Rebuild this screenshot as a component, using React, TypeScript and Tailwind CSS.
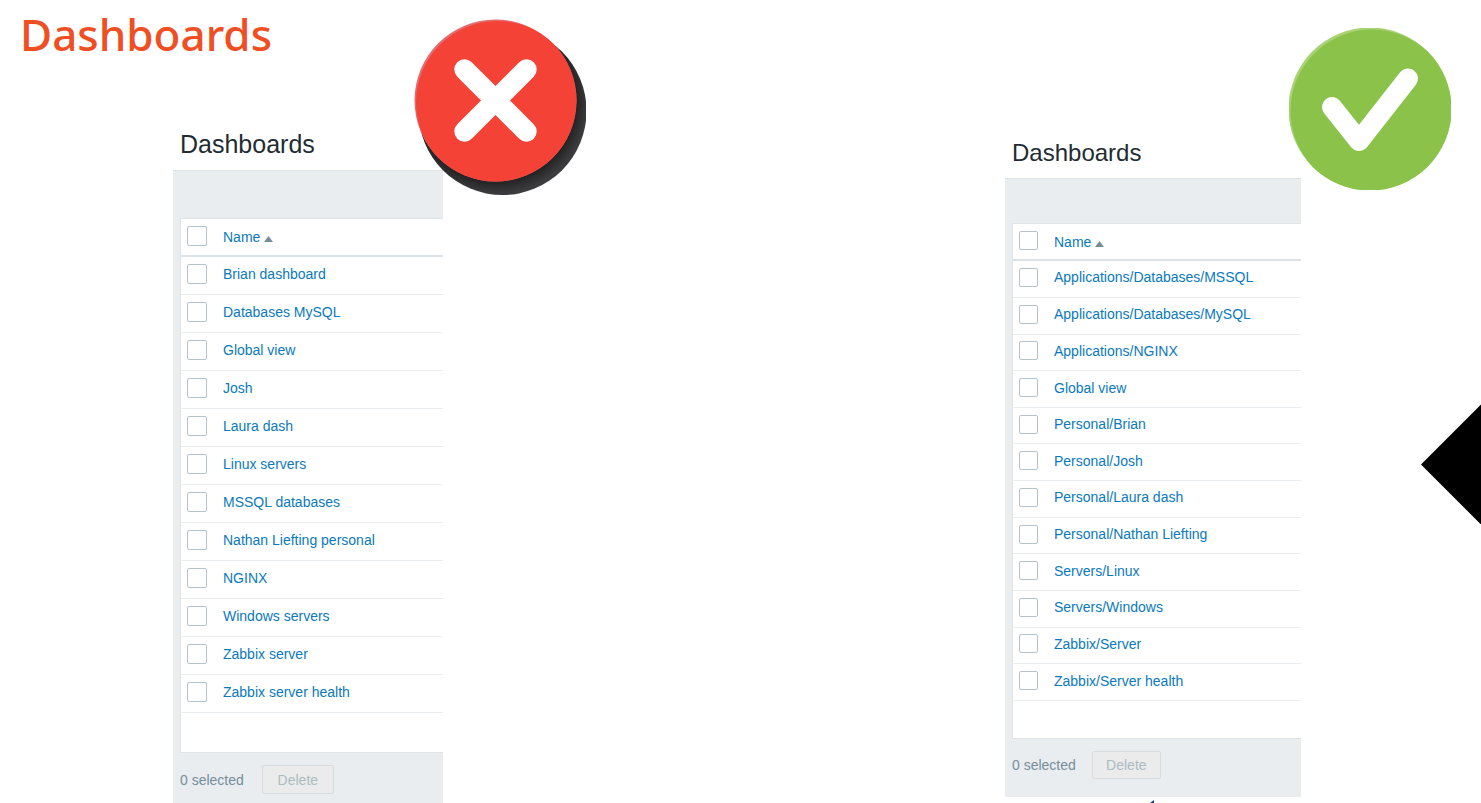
import React from "react";

type Size = "large" | "small";

const leftNames = [
  "Brian dashboard",
  "Databases MySQL",
  "Global view",
  "Josh",
  "Laura dash",
  "Linux servers",
  "MSSQL databases",
  "Nathan Liefting personal",
  "NGINX",
  "Windows servers",
  "Zabbix server",
  "Zabbix server health",
];

const rightNames = [
  "Applications/Databases/MSSQL",
  "Applications/Databases/MySQL",
  "Applications/NGINX",
  "Global view",
  "Personal/Brian",
  "Personal/Josh",
  "Personal/Laura dash",
  "Personal/Nathan Liefting",
  "Servers/Linux",
  "Servers/Windows",
  "Zabbix/Server",
  "Zabbix/Server health",
];

const sizes = {
  large: {
    heading: "text-[25px] leading-[32px] h-[42px]",
    toolbar: "h-[47px]",
    table: "h-[494px]",
    headRow: "h-[37px]",
    tickColumn: "w-[42px]",
    box: "size-5",
    blank: "h-[39px]",
    footer: "pt-[12px] pb-[10px]",
    button: "ml-[18px] h-[29px] w-[72px]",
  },
  small: {
    heading: "text-[24px] leading-[30px] h-[40px]",
    toolbar: "h-[44px]",
    table: "h-[477px]",
    headRow: "h-[36px]",
    tickColumn: "w-[41px]",
    box: "size-[19px]",
    blank: "h-[37px]",
    footer: "pt-[12px] pb-[18px]",
    button: "ml-4 h-[28px] w-[69px]",
  },
};

function Tick({ label, size }: { label: string; size: Size }) {
  return (
    <input
      type="checkbox"
      aria-label={label}
      className={`block appearance-none rounded-[2px] border border-[#b4c3cb] bg-white ${sizes[size].box}`}
    />
  );
}

function DashboardList({ names, size }: { names: string[]; size: Size }) {
  const s = sizes[size];
  return (
    <>
      <h2 className={`pl-[7px] text-[#1f2c33] ${s.heading}`}>Dashboards</h2>
      <div className="border-t border-[#dfe4e7] bg-[#e9edf0] pl-[7px] text-[14px] leading-5">
        <div className={s.toolbar} />
        <div className="border-y border-l border-[#dfe4e7] bg-white">
          <table className={`w-full border-collapse ${s.table}`}>
            <thead>
              <tr className={`border-b-2 border-[#dce2e5] ${s.headRow}`}>
                <th className={`p-0 pb-[2px] pl-[6px] ${s.tickColumn}`}>
                  <Tick label="Select all" size={size} />
                </th>
                <th className="p-0 text-left font-normal">
                  <a href="#name" className="inline-flex items-center gap-1 text-[#0a79bd]">
                    Name
                    <svg width="9" height="6" viewBox="0 0 9 6" className="mt-1" aria-hidden="true">
                      <path d="M0 6 4.5 0 9 6Z" fill="#768d99" />
                    </svg>
                  </a>
                </th>
              </tr>
            </thead>
            <tbody>
              {names.map((name) => (
                <tr key={name} className="border-b border-[#ebeef0]">
                  <td className="p-0 pb-[3px] pl-[6px]">
                    <Tick label={name} size={size} />
                  </td>
                  <td className="p-0 pb-[3px]">
                    <a href="#dashboard" className="text-[#0a79bd]">
                      {name}
                    </a>
                  </td>
                </tr>
              ))}
            </tbody>
          </table>
          <div className={s.blank} />
        </div>
        <div className={`flex items-center ${s.footer}`}>
          <span className="text-[#768d99]">0 selected</span>
          <button
            type="button"
            disabled
            className={`rounded-[2px] border border-[#d6dcdf] bg-[#ebebeb] text-[#acbbc2] ${s.button}`}
          >
            Delete
          </button>
        </div>
      </div>
    </>
  );
}

function CrossBadge() {
  return (
    <svg width="172" height="177" viewBox="0 0 172 177" className="absolute -top-[110px] left-[241px]" aria-hidden="true">
      <defs>
        <radialGradient id="cross-shade" gradientUnits="userSpaceOnUse" cx="82" cy="84" r="98">
          <stop offset="0.82" stopColor="#242425" />
          <stop offset="0.94" stopColor="#3c3c3e" />
        </radialGradient>
        <clipPath id="cross-disc">
          <circle cx="81.500" cy="82.500" r="81" />
        </clipPath>
      </defs>
      <circle cx="88.500" cy="93" r="84" fill="url(#cross-shade)" />
      <circle cx="81.500" cy="82.500" r="81" fill="#e36b72" />
      <circle cx="83.500" cy="84.500" r="81.500" fill="#f44336" clipPath="url(#cross-disc)" />
      <path d="M50.500 51.500 112.500 113.500M112.500 51.500 50.500 113.500" stroke="#fff" strokeWidth="20.400" strokeLinecap="round" />
    </svg>
  );
}

function CheckBadge() {
  return (
    <svg width="162" height="162" viewBox="0 0 162 162" className="absolute -top-[110px] left-[284px]" aria-hidden="true">
      <defs>
        <clipPath id="check-disc">
          <circle cx="81" cy="81" r="81.500" />
        </clipPath>
      </defs>
      <circle cx="81" cy="81" r="81.500" fill="#a9d275" />
      <circle cx="83" cy="83" r="81.500" fill="#8bc34a" clipPath="url(#check-disc)" />
      <path d="M43 79 70 113 119 50.500" fill="none" stroke="#fff" strokeWidth="20" strokeLinecap="round" strokeLinejoin="round" />
    </svg>
  );
}

export default function App() {
  return (
    <main className="relative h-screen overflow-hidden bg-white font-['Liberation_Sans',Arial,sans-serif]">
      <h1 className="h-[128px] pl-5 font-['Noto_Sans','Open_Sans',sans-serif] text-[44px] leading-[68px] font-medium text-[#f04e23]">
        Dashboards
      </h1>
      <div className="flex items-start justify-between pr-[180px] pl-[173px]">
        <section className="relative w-[270px]">
          <DashboardList names={leftNames} size="large" />
          <CrossBadge />
        </section>
        <section className="relative mt-[10px] w-[296px]">
          <DashboardList names={rightNames} size="small" />
          <CheckBadge />
          <svg width="6" height="4" viewBox="0 0 6 4" className="absolute top-full left-[145px] mt-[2px]" aria-hidden="true">
            <path d="M0 4 4 1 4 4Z" fill="#1f3c88" />
          </svg>
        </section>
      </div>
      <svg width="60" height="120" viewBox="0 0 60 120" className="absolute top-[404px] right-0" aria-hidden="true">
        <path d="M0 60.500 60 0.500V120.500Z" fill="#000" />
      </svg>
    </main>
  );
}
